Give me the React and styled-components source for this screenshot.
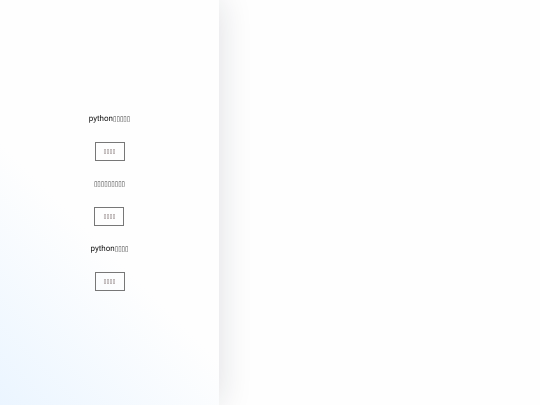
import React from "react";
import styled, { createGlobalStyle } from "styled-components";

const GlobalStyle = createGlobalStyle`
  * { box-sizing: border-box; }
  body {
    margin: 0;
    background: #fefefe;
    color: #111;
    font-family: Roboto, "Liberation Sans", Arial, sans-serif;
    text-rendering: geometricPrecision;
  }
`;

const Page = styled.main`
  display: flex;
  min-height: 100vh;
  overflow: hidden;
`;

const Sidebar = styled.nav`
  flex: 0 0 219px;
  display: flex;
  flex-direction: column;
  align-items: center;
  justify-content: center;
  gap: 16px;
  padding-bottom: 3px;
  background: linear-gradient(45deg, #ebf5ff 0%, #fefefe 42%);
  box-shadow: 0 0 32px rgba(20, 30, 50, 0.14);
  will-change: transform;
`;

const Group = styled.section`
  display: flex;
  flex-direction: column;
  align-items: center;
  gap: 16px;
`;

const Title = styled.h2`
  margin: 0;
  height: 14px;
  font-size: 8px;
  font-weight: 400;
  line-height: 14px;
`;

const Glyphs = styled.span`
  color: #333;
  font-family: "DejaVu Sans Condensed", sans-serif;
  font-size: 7px;
`;

const Action = styled.button`
  width: 30px;
  height: 19px;
  padding: 0;
  border: 1px solid #777;
  background: transparent;
  color: #655;
  font-family: "DejaVu Sans Condensed", sans-serif;
  font-size: 6px;
  line-height: 16px;
`;

const groups = [
  { latin: "python", glyphs: "▯▯▯▯▯", action: "▯▯▯▯" },
  { latin: "", glyphs: "▯▯▯▯▯▯▯▯▯", action: "▯▯▯▯" },
  { latin: "python", glyphs: "▯▯▯▯", action: "▯▯▯▯" },
];

export default function App() {
  return (
    <>
      <GlobalStyle />
      <Page>
        <Sidebar>
          {groups.map(({ latin, glyphs, action }) => (
            <Group key={glyphs}>
              <Title>
                {latin}
                <Glyphs>{glyphs}</Glyphs>
              </Title>
              <Action type="button">{action}</Action>
            </Group>
          ))}
        </Sidebar>
      </Page>
    </>
  );
}
